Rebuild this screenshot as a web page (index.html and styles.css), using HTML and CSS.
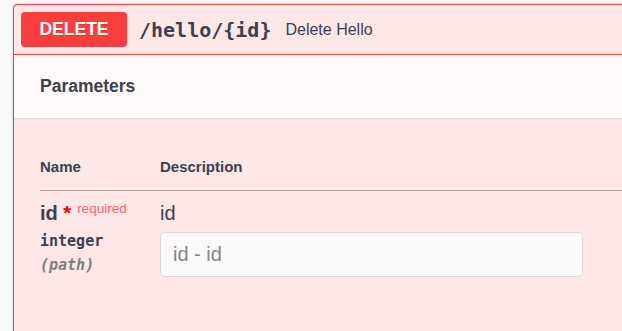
FILE: index.html
```html
<!DOCTYPE html>
<html>
	<head>
		<meta charset="UTF-8">
		<title>Delete Hello</title>
		<link rel="stylesheet" href="styles.css">
	</head>
	<body>
		<div class="opblock">
			<div class="summary">
				<span class="method">DELETE</span>
				<span class="path">/hello/{id}</span>
				<span class="summary-desc">Delete Hello</span>
			</div>
			<div class="section-header">
				<h4>Parameters</h4>
			</div>
			<div class="table-container">
				<table class="parameters">
					<thead>
						<tr>
							<th class="col-name">Name</th>
							<th>Description</th>
						</tr>
					</thead>
					<tbody>
						<tr>
							<td class="col-name">
								<div class="param-name">id<span class="star">&nbsp;*</span><span class="req">required</span></div>
								<div class="param-type">integer</div>
								<div class="param-in">(path)</div>
							</td>
							<td>
								<div class="param-desc">id</div>
								<input type="text" placeholder="id - id">
							</td>
						</tr>
					</tbody>
				</table>
			</div>
		</div>
	</body>
</html>
```

FILE: styles.css
```css
html,body{
	overflow: hidden;
}
body{
	margin: 0;
	padding: 4px 0 0 13px;
	background: #f9f9f9;
	font-family: "Liberation Sans", Arial, sans-serif;
	color: #3b4151;
}
.opblock{
	width: 660px;
	height: 400px;
	border: 1px solid #f93e3e;
	border-radius: 4px;
	background: #fde7e7;
	box-shadow: 0 0 3px rgba(0,0,0,.19);
}
.summary{
	display: flex;
	align-items: center;
	padding: 7px;
	border-bottom: 1px solid #f93e3e;
}
.method{
	width: 106px;
	height: 35px;
	border-radius: 4px;
	background: #f93e3e;
	color: #fff;
	font: bold 17.5px/35px "Liberation Sans", Arial, sans-serif;
	text-align: center;
	text-shadow: 0 1px 0 rgba(0,0,0,.1);
}
.path{
	padding: 0 14px 0 12px;
	font: bold 20px "DejaVu Sans Mono", monospace;
	color: #3b4151;
}
.summary-desc{
	font-size: 16px;
	color: #3b4151;
}
.section-header{
	display: flex;
	align-items: center;
	height: 63px;
	padding: 0 26px;
	background: rgba(255,255,255,.8);
	box-shadow: 0 1px 2px rgba(0,0,0,.1);
}
.section-header h4{
	margin: 0;
	font-size: 17.5px;
	font-weight: bold;
}
.table-container{
	padding: 25px 0 0 26px;
}
.parameters{
	width: 100%;
	border-collapse: collapse;
}
.parameters th{
	padding: 15px 0;
	font-size: 15px;
	line-height: 17px;
	text-align: left;
	border-bottom: 1px solid rgba(59,65,81,.2);
}
.parameters td{
	padding: 11px 0;
	vertical-align: top;
}
.col-name{
	width: 120px;
}
.param-name{
	font-size: 20px;
	line-height: 23px;
	font-weight: bold;
}
.star{
	color: #f00;
}
.req{
	color: rgba(255,0,0,.6);
	font-size: 13.5px;
	font-weight: normal;
	position: relative;
	top: -7px;
	padding-left: 6px;
}
.param-type{
	padding: 6px 0;
	font: bold 15px/17.5px "DejaVu Sans Mono", monospace;
}
.param-in{
	font: italic bold 15px/17.5px "DejaVu Sans Mono", monospace;
	color: #808080;
}
.param-desc{
	font-size: 20px;
	line-height: 23px;
}
input{
	display: block;
	box-sizing: border-box;
	width: 423px;
	height: 45px;
	margin-top: 7px;
	padding: 0 12px;
	border: 1px solid #d9d9d9;
	border-radius: 5px;
	background: #fafafa;
	font: 20px "Liberation Sans", Arial, sans-serif;
	color: #3b4151;
}
input::placeholder{
	color: #858585;
}
```
